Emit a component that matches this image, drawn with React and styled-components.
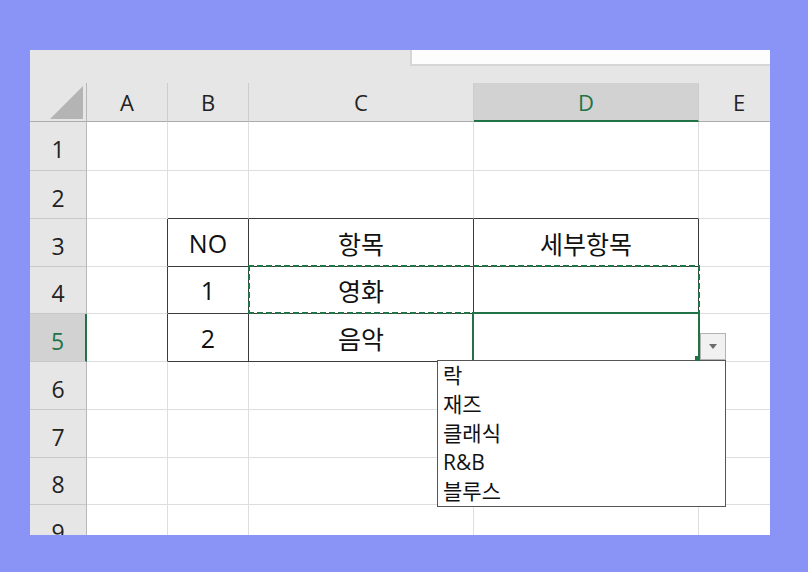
import React from 'react'
import styled, { createGlobalStyle } from 'styled-components'

const GREEN = '#217346'
const GRID = '#dedede'
const DARK = '#3a3a3a'

const GlobalStyle = createGlobalStyle`
  *, *::before, *::after { box-sizing: border-box; }
  body {
    margin: 0;
    background: #8a94f6;
    font-family: "Open Sans", "Noto Sans CJK KR", sans-serif;
  }
`

const Page = styled.div`
  width: 808px;
  height: 572px;
  padding: 50px 38px 37px 30px;
`

const Window = styled.div`
  width: 740px;
  height: 485px;
  overflow: hidden;
  background: #e6e6e6;
  display: flex;
  flex-direction: column;
`

const TopStrip = styled.div`
  height: 33px;
  flex-shrink: 0;
  display: flex;
  justify-content: flex-end;
  align-items: flex-start;
`

const FormulaBox = styled.div`
  width: 360px;
  height: 16px;
  background: #fdfdfd;
  border-left: 2px solid #d6d6d6;
  border-bottom: 2px solid #d6d6d6;
`

const Sheet = styled.div`
  display: grid;
  grid-template-columns: 57px 81px 81px 225px 225px 81px;
  grid-template-rows: 39px 49px 48px 48px 47px 48px 48px 48px 47px 48px;
  background: #fff;
`

const Corner = styled.div`
  background: #e6e6e6;
  border-right: 1px solid #b8b8b8;
  border-bottom: 1px solid #ababab;
  display: flex;
  align-items: flex-end;
  justify-content: flex-end;
  padding: 0 3px 2px 0;
`

const CornerMark = styled.div`
  width: 33px;
  height: 33px;
  background: #b4b4b4;
  clip-path: polygon(100% 0, 100% 100%, 0 100%);
`

const ColHeader = styled.div`
  background: ${p => (p.$active ? '#d2d2d2' : '#e6e6e6')};
  color: ${p => (p.$active ? GREEN : '#222')};
  border-right: 1px solid #cdcdcd;
  border-bottom: ${p => (p.$active ? `2px solid ${GREEN}` : '1px solid #ababab')};
  font-size: 22px;
  display: flex;
  align-items: center;
  justify-content: center;
`

const RowHeader = styled.div`
  background: ${p => (p.$active ? '#d2d2d2' : '#e6e6e6')};
  color: ${p => (p.$active ? GREEN : '#222')};
  border-right: ${p => (p.$active ? `2px solid ${GREEN}` : '1px solid #b8b8b8')};
  border-bottom: 1px solid #c8c8c8;
  font-size: 23px;
  padding-top: 6px;
  display: flex;
  align-items: center;
  justify-content: center;
`

const Cell = styled.div`
  position: relative;
  background: #fff;
  border-right: 1px solid ${p => (p.$darkRight ? DARK : GRID)};
  border-bottom: 1px solid ${p => (p.$darkBottom ? DARK : GRID)};
  font-size: 25px;
  color: #111;
  display: flex;
  align-items: center;
  justify-content: center;
`

// marching ants around the copied range C4:D4
const CopyMarquee = styled.div`
  position: absolute;
  left: -1px;
  top: -2px;
  width: 452px;
  height: 49px;
  z-index: 3;
  pointer-events: none;
  background:
    repeating-linear-gradient(90deg, ${GREEN} 0 6px, transparent 6px 9px) left top / 100% 2px no-repeat,
    repeating-linear-gradient(90deg, ${GREEN} 0 6px, transparent 6px 9px) left bottom / 100% 2px no-repeat,
    repeating-linear-gradient(180deg, ${GREEN} 0 6px, transparent 6px 9px) left top / 2px 100% no-repeat,
    repeating-linear-gradient(180deg, ${GREEN} 0 6px, transparent 6px 9px) right top / 2px 100% no-repeat;
`

const Selection = styled.div`
  position: absolute;
  left: -2px;
  right: -2px;
  top: -2px;
  bottom: -1px;
  border: 2px solid ${GREEN};
  z-index: 2;
`

const FillHandle = styled.div`
  position: absolute;
  right: -2px;
  bottom: -1px;
  width: 5px;
  height: 5px;
  background: ${GREEN};
  z-index: 5;
`

const DropButton = styled.div`
  position: absolute;
  left: calc(100% + 2px);
  bottom: 0;
  width: 26px;
  height: 27px;
  background: #f1f1f1;
  border: 1px solid #b3b3b3;
  display: flex;
  align-items: center;
  justify-content: center;
  &::after {
    content: '';
    border-left: 4.5px solid transparent;
    border-right: 4.5px solid transparent;
    border-top: 5px solid #6b6b6b;
  }
`

const ListBox = styled.div`
  position: absolute;
  top: 100%;
  left: -37px;
  width: 289px;
  height: 147px;
  background: #fff;
  border: 1px solid #555;
  z-index: 4;
`

const ListItem = styled.div`
  padding-left: 5px;
  font-size: 21px;
  line-height: 29px;
  color: #111;
`

const COLS = ['A', 'B', 'C', 'D', 'E']
const ROWS = [1, 2, 3, 4, 5, 6, 7, 8, 9]
const DATA = {
  B3: 'NO', C3: '항목', D3: '세부항목',
  B4: '1', C4: '영화',
  B5: '2', C5: '음악',
}
const OPTIONS = ['락', '재즈', '클래식', 'R&B', '블루스']

// table B3:D5 has black borders
const inTable = (c, r) => c >= 1 && c <= 3 && r >= 3 && r <= 5

export default function App() {
  return (
    <Page>
      <GlobalStyle />
      <Window>
        <TopStrip>
          <FormulaBox />
        </TopStrip>
        <Sheet>
          <Corner><CornerMark /></Corner>
          {COLS.map(col => (
            <ColHeader key={col} $active={col === 'D'}>{col}</ColHeader>
          ))}
          {ROWS.map(r => (
            <React.Fragment key={r}>
              <RowHeader $active={r === 5}>{r}</RowHeader>
              {COLS.map((col, c) => {
                const id = col + r
                return (
                  <Cell
                    key={id}
                    $darkRight={inTable(c, r) || inTable(c + 1, r)}
                    $darkBottom={inTable(c, r) || inTable(c, r + 1)}
                  >
                    {DATA[id]}
                    {id === 'C4' && <CopyMarquee />}
                    {id === 'D5' && (
                      <Selection>
                        <DropButton />
                        <ListBox>
                          {OPTIONS.map(o => <ListItem key={o}>{o}</ListItem>)}
                        </ListBox>
                        <FillHandle />
                      </Selection>
                    )}
                  </Cell>
                )
              })}
            </React.Fragment>
          ))}
        </Sheet>
      </Window>
    </Page>
  )
}
